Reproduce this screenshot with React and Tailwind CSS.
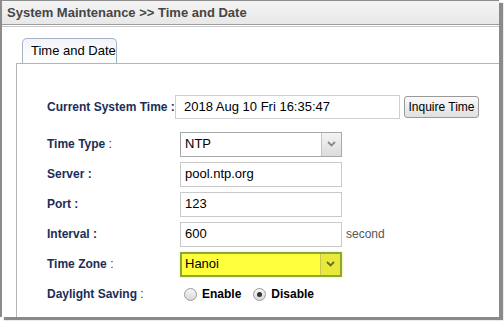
import React from "react";

const font = { fontFamily: '"Liberation Sans", Arial, sans-serif' };

const Arrow = ({ yellow }) => (
  <div
    className={`w-[20px] self-stretch flex items-center justify-center border-l ${
      yellow ? "bg-[#e9e93a] border-[#c8c850]" : "bg-gradient-to-b from-[#f4f4f4] to-[#dcdcdc] border-[#c4c4c4]"
    }`}
  >
    <svg width="9" height="6" viewBox="0 0 9 6">
      <path d="M1 1 L4.5 4.5 L8 1" fill="none" stroke={yellow ? "#6a6a20" : "#8a8a8a"} strokeWidth="1.8" />
    </svg>
  </div>
);

function Row({ label, children }) {
  return (
    <div className="flex items-center h-[30px]">
      <div className="w-[133px] shrink-0 text-[12px] font-bold text-[#1b2d57]">{label}</div>
      {children}
    </div>
  );
}

const Field = ({ value, w = "w-[162px]" }) => (
  <div className={`${w} h-[25px] border border-[#c9c9c9] bg-white flex items-center px-[4px] text-[13px] text-black`}>
    {value}
  </div>
);

const Radio = ({ checked }) => (
  <span className="w-[13px] h-[13px] rounded-full border border-[#9a9a9a] bg-gradient-to-b from-[#f6f6f6] to-[#d8d8d8] flex items-center justify-center">
    {checked && <span className="w-[5px] h-[5px] rounded-full bg-[#333]" />}
  </span>
);

export default function App() {
  return (
    <div className="w-[504px] h-[321px] bg-white" style={font}>
      <div className="w-[499px] h-[317px] border-l-2 border-t border-[#8c8c8c] shadow-[4px_3px_1px_#8a8a8a] flex flex-col bg-white">
        <div className="h-[24px] bg-gradient-to-b from-[#f4f4f4] to-[#e8e8e8] border-b border-[#9c9c9c] flex items-center pl-[5px] text-[13px] font-bold text-[#454545]">
          System Maintenance &gt;&gt; Time and Date
        </div>
        <div className="h-[1px] bg-white" />
        <div className="h-[1px] bg-[#c6c6c6]" />
        <div className="flex-1 pl-[14px] pt-[11px] flex flex-col">
          <div className="flex pl-[6px]">
            <div className="w-[95px] h-[25px] border border-b-0 border-[#a6b4c8] rounded-t-[5px] bg-gradient-to-b from-[#f2f4f8] to-white flex items-center pl-[8px] text-[13px] text-black">
              Time and Date
            </div>
          </div>
          <div className="flex-1 border-l border-t border-[#b5b5b5] pl-[30px] pt-[31px]">
            <div className="flex items-center h-[24px] mb-[10px]">
              <div className="w-[128px] shrink-0 text-[12px] font-bold text-[#1b2d57]">Current System Time :</div>
              <div className="w-[225px] h-[24px] border border-[#cfcfcf] flex items-center px-[8px] text-[13px] text-black">
                2018 Aug 10 Fri 16:35:47
              </div>
              <button className="ml-[4px] h-[22px] w-[75px] border border-[#9a9a9a] rounded-[3px] bg-gradient-to-b from-[#fafafa] to-[#e0e0e0] text-[12px] text-black">
                Inquire Time
              </button>
            </div>
            <div className="flex flex-col">
              <Row label={<span>Time Type <span className="font-normal">:</span></span>}>
                <div className="w-[162px] h-[25px] border border-[#a8a8a8] bg-white flex items-center text-[13px] text-black">
                  <span className="flex-1 pl-[4px]">NTP</span>
                  <Arrow />
                </div>
              </Row>
              <Row label="Server :">
                <Field value="pool.ntp.org" />
              </Row>
              <Row label="Port :">
                <Field value="123" />
              </Row>
              <Row label="Interval :">
                <Field value="600" />
                <span className="ml-[4px] text-[12px] text-[#555]">second</span>
              </Row>
              <Row label={<span>Time Zone <span className="font-normal">:</span></span>}>
                <div className="w-[162px] h-[25px] border-2 border-[#8aa83a] bg-[#ffff3c] flex items-center text-[13px] text-black shadow-[0_0_2px_#f0f030]">
                  <span className="flex-1 pl-[3px]">Hanoi</span>
                  <Arrow yellow />
                </div>
              </Row>
              <Row label={<span>Daylight Saving <span className="font-normal">:</span></span>}>
                <div className="flex items-center pl-[4px] text-[12px] font-bold text-black">
                  <Radio />
                  <span className="ml-[5px]">Enable</span>
                  <span className="ml-[12px]"><Radio checked /></span>
                  <span className="ml-[5px]">Disable</span>
                </div>
              </Row>
            </div>
          </div>
        </div>
      </div>
    </div>
  );
}
